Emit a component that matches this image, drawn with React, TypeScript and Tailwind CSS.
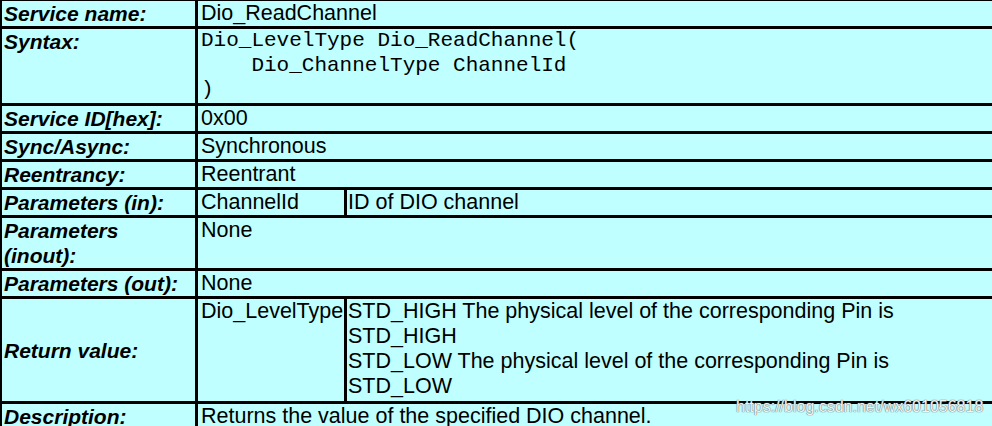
import React from "react";

type Row = {
  label: React.ReactNode;
  value?: React.ReactNode;
  sub?: [React.ReactNode, React.ReactNode];
  h?: string;
  center?: boolean;
};

const rows: Row[] = [
  { label: "Service name:", value: "Dio_ReadChannel" },
  {
    label: "Syntax:",
    h: "h-[77px]",
    value: (
      <div className="font-['Liberation_Mono',monospace] text-[21px] whitespace-pre leading-[24.6px]">
        {"Dio_LevelType Dio_ReadChannel(\n    Dio_ChannelType ChannelId\n)"}
      </div>
    ),
  },
  { label: "Service ID[hex]:", value: "0x00" },
  { label: "Sync/Async:", value: "Synchronous" },
  { label: "Reentrancy:", value: "Reentrant" },
  { label: "Parameters (in):", sub: ["ChannelId", "ID of DIO channel"] },
  {
    label: (
      <>
        Parameters
        <br />
        (inout):
      </>
    ),
    value: "None",
    h: "h-[53px]",
  },
  { label: "Parameters (out):", value: "None" },
  {
    label: "Return value:",
    center: true,
    h: "h-[105px]",
    sub: [
      "Dio_LevelType",
      <>
        <div>STD_HIGH The physical level of the corresponding Pin is</div>
        <div>STD_HIGH</div>
        <div>STD_LOW The physical level of the corresponding Pin is</div>
        <div>STD_LOW</div>
      </>,
    ],
  },
  { label: "Description:", value: "Returns the value of the specified DIO channel." },
];

export default function App() {
  return (
    <div className="relative w-[992px] h-[426px] overflow-hidden bg-[#bfffff] text-black font-['Liberation_Sans',Arial,sans-serif] text-[21.5px] leading-[25px]">
      <div className="w-[1040px] border-l-2 border-t border-black">
        {rows.map((r, i) => (
          <div key={i} className={`flex border-b-[3px] border-black ${r.h ?? "h-[28px]"}`}>
            <div
              className={`w-[196px] shrink-0 border-r-[3px] border-black pl-[2px] text-[21px] font-bold italic whitespace-nowrap flex ${
                r.center ? "items-center" : "items-start"
              }`}
            >
              <div>{r.label}</div>
            </div>
            {r.sub ? (
              <div className="flex flex-1">
                <div className="w-[149px] shrink-0 border-r-[3px] border-black pl-[3px] whitespace-nowrap">
                  {r.sub[0]}
                </div>
                <div className="flex-1 pl-[1px] whitespace-nowrap">{r.sub[1]}</div>
              </div>
            ) : (
              <div className="flex-1 pl-[3px] whitespace-nowrap">{r.value}</div>
            )}
          </div>
        ))}
      </div>
      <div className="absolute left-[736px] top-[399px] text-[16px] leading-[16px] text-[#f4f4f4] [text-shadow:0_0_1px_#666,0_0_1px_#666] whitespace-nowrap">
        https://blog.csdn.net/wx601056818
      </div>
    </div>
  );
}
